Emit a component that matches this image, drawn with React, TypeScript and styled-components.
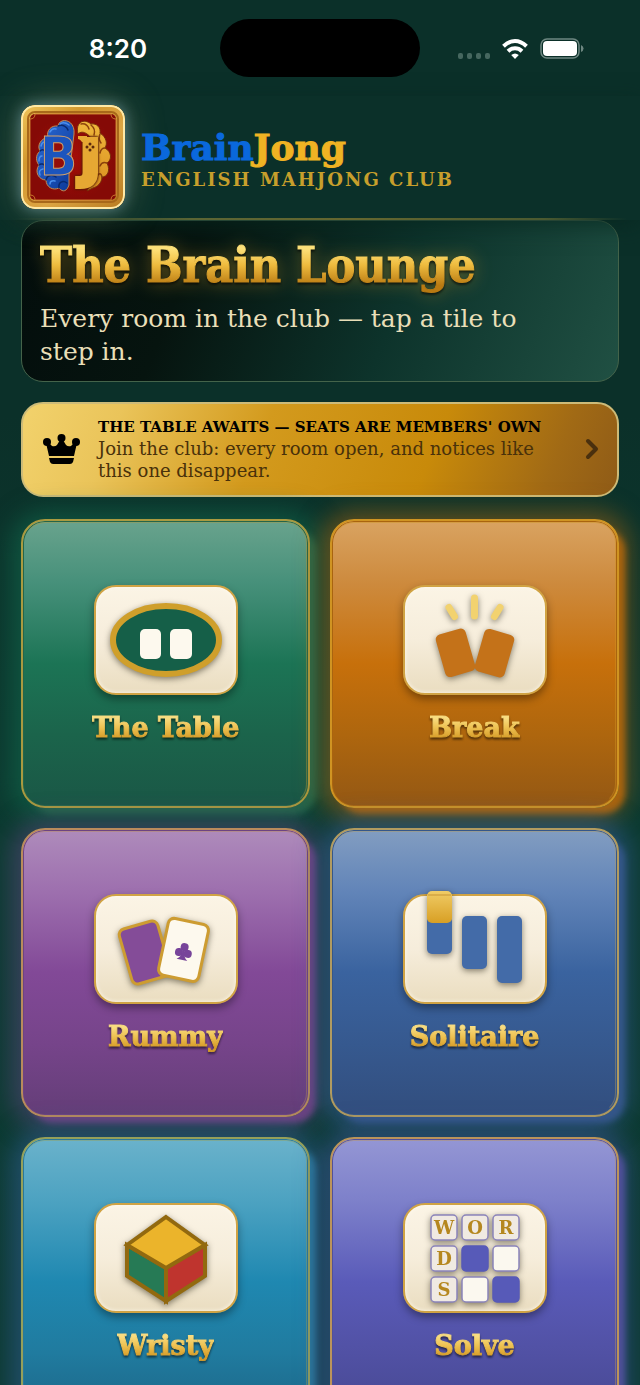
import React from 'react';
import styled, { createGlobalStyle } from 'styled-components';

const serif = `'DejaVu Serif', 'Liberation Serif', serif`;
const narrow = `'DejaVu Serif Condensed', 'DejaVu Serif', 'Liberation Serif', serif`;

const GlobalStyle = createGlobalStyle`
  *, *::before, *::after { box-sizing: border-box; }
  body { margin: 0; background: #0b3029; font-family: ${serif}; }
  h1, p { margin: 0; }
`;

const Screen = styled.div`
  height: 100vh;
  display: flex;
  flex-direction: column;
  overflow: hidden;
  background: linear-gradient(180deg, #0b3029 0%, #0b3029 30%, #0c3b31 60%, #0d3a33 100%);
`;

const StatusBar = styled.div`
  display: grid;
  grid-template-columns: 1fr 200px 1fr;
  align-items: center;
  height: 96px;
  flex: none;
  color: #fff;
`;

const Clock = styled.time`
  justify-self: center;
  padding: 2px 0 0 16px;
  font: 600 26px/32px Inter, Roboto, sans-serif;
`;

const Island = styled.div`
  height: 58px;
  border-radius: 29px;
  background: #000;
`;

const Signals = styled.div`
  display: flex;
  align-items: center;
  justify-content: flex-end;
  gap: 12px;
  padding: 2px 56px 0 0;
`;

const Header = styled.header`
  position: relative;
  z-index: 1;
  flex: none;
  display: flex;
  align-items: center;
  gap: 16px;
  padding: 9px 21px 11px;
  box-shadow: 0 6px 20px rgba(7, 38, 32, 0.7);
  &::after {
    content: '';
    position: absolute;
    inset: auto 0 0;
    height: 2px;
    background: linear-gradient(90deg, transparent 2%, #5b6534 30%, #65672f 55%, #4b5a30 85%, transparent 98%);
  }
`;

const Logo = styled.svg`
  flex: none;
  width: 104px;
  height: 104px;
  border-radius: 14px;
  box-shadow: 0 0 14px rgba(130, 175, 200, 0.55), 0 0 38px rgba(190, 190, 130, 0.36);
`;

const Monogram = styled.text`
  font-weight: 700;
  filter: drop-shadow(0 0 1px #571c05) drop-shadow(0 0 1px #571c05);
`;

const Brand = styled.div`
  padding-top: 10px;
  font-weight: 700;
`;

const BrandName = styled.div`
  font-size: 36px;
  line-height: 36px;
  color: #f0b323;
  -webkit-text-stroke: 1px currentColor;
  span { color: #0a68dc; }
`;

const Tagline = styled.div`
  font-size: 18px;
  line-height: 30px;
  letter-spacing: 2px;
  color: #c79f2c;
`;

const Main = styled.main`
  flex: 1;
  min-height: 0;
  overflow-y: auto;
  scrollbar-width: none;
  display: flex;
  flex-direction: column;
  gap: 20px;
  padding: 0 21px 20px;
`;

const Hero = styled.section`
  flex: none;
  padding: 15px 18px 13px;
  border: 1px solid #44634a;
  border-radius: 22px;
  background: linear-gradient(112deg, #030d0c 0%, #06140f 28%, #0d332b 62%, #205043 100%);
`;

const Title = styled.h1`
  font: 700 48px/58px ${narrow};
  background: linear-gradient(180deg, #ffe27a 22%, #eebb3e 50%, #b97a12 85%);
  background-clip: text;
  color: transparent;
  -webkit-text-stroke: 1px transparent;
  filter: drop-shadow(0 2px 1px rgba(0, 0, 0, 0.6)) drop-shadow(0 0 9px rgba(190, 145, 35, 0.45));
`;

const Lead = styled.p`
  padding: 8px 40px 0 0;
  font-size: 25px;
  line-height: 33px;
  color: #e9dfb8;
`;

const Banner = styled.button`
  flex: none;
  display: flex;
  align-items: center;
  gap: 18px;
  padding: 12px 17px 13px 20px;
  border: 2px solid #cdbb78;
  border-radius: 22px;
  background: linear-gradient(112deg, #f2d26c 0%, #eac45a 16%, #d39a1d 40%, #c88a0a 68%, #a16a15 88%, #8f5b17 100%);
  color: #000;
  text-align: left;
`;

const BannerText = styled.span`
  flex: 1;
  display: flex;
  flex-direction: column;
  strong { font: 700 15px/22px ${serif}; white-space: nowrap; }
  span { font: 400 18px/22px ${serif}; color: #49310a; }
`;

const Grid = styled.nav`
  display: grid;
  grid-template-columns: 1fr 1fr;
  gap: 20px;
  padding-top: 2px;
`;

interface Tone { top: string; upper: string; mid: string; low: string; bottom: string; edge: string; glow: string; rim: string }

const Tile = styled.a<{ $tone: Tone }>`
  position: relative;
  aspect-ratio: 1;
  display: flex;
  flex-direction: column;
  align-items: center;
  justify-content: center;
  gap: 17px;
  border: 2px solid ${p => p.$tone.rim};
  border-radius: 24px;
  text-decoration: none;
  background: linear-gradient(180deg, ${p => p.$tone.top} 0%, ${p => p.$tone.upper} 22%, ${p => p.$tone.mid} 50%, ${p => p.$tone.low} 75%, ${p => p.$tone.bottom} 100%);
  box-shadow:
    inset 0 0 0 1px ${p => p.$tone.edge},
    8px 8px 6px -2px ${p => p.$tone.edge},
    0 2px 24px 10px ${p => p.$tone.glow};
  &::after {
    content: '';
    position: absolute;
    inset: 1px;
    border: 1px solid ${p => p.$tone.rim};
    border-bottom-color: transparent;
    border-left-color: transparent;
    border-radius: 21px;
    opacity: 0.45;
  }
`;

const Plaque = styled.svg`
  width: 144px;
  height: 110px;
  overflow: visible;
  border: 2px solid #d0a344;
  border-radius: 22px;
  background: linear-gradient(180deg, #fbf4e5 0%, #f6eddb 50%, #eaddc0 100%);
  box-shadow: inset 0 0 4px #fffaf0, 0 4px 9px rgba(0, 0, 0, 0.38);
`;

const Shaded = styled.g`
  filter: drop-shadow(0 2px 3px rgba(20, 15, 0, 0.5));
`;

const Letter = styled.text`
  font: 700 18px ${serif};
  text-anchor: middle;
  fill: #b5871f;
`;

const TileName = styled.span`
  font: 700 27px/31px ${serif};
  background: linear-gradient(180deg, #f8dc80 20%, #eec252 50%, #d69c28 85%);
  background-clip: text;
  color: transparent;
  -webkit-text-stroke: 1px transparent;
  filter: drop-shadow(0 2px 1px rgba(0, 0, 0, 0.55));
`;

const TableArt = () => (
  <Shaded>
    <ellipse cx="72" cy="55" rx="53" ry="34" fill="#155f48" stroke="#cf9f2b" strokeWidth="6" />
    <rect x="46" y="44" width="21" height="30" rx="5" fill="#fdf9ee" />
    <rect x="76" y="44" width="22" height="30" rx="5" fill="#fdf9ee" />
  </Shaded>
);

const BreakArt = () => (
  <Shaded>
    <rect x="37" y="46" width="31" height="44" rx="5" fill="#c47219" transform="rotate(-16 52 68)" />
    <rect x="76" y="46" width="31" height="44" rx="5" fill="#c47219" transform="rotate(16 91 68)" />
    <path d="M71.500 13V31M46 22.500L51.500 31.500M97 22.500L91.500 31.500" stroke="#f2d26f" strokeWidth="7" strokeLinecap="round" />
  </Shaded>
);

const RummyArt = () => (
  <Shaded>
    <rect x="31" y="30" width="40" height="57" rx="6" fill="#844c98" stroke="#cd9c31" strokeWidth="3" transform="rotate(-16 51 59)" />
    <g transform="rotate(12 90 56)">
      <rect x="69" y="27" width="41" height="58" rx="6" fill="#fdf9ee" stroke="#cd9c31" strokeWidth="3" />
      <g fill="#77449a">
        <circle cx="90" cy="53" r="4" />
        <circle cx="85.500" cy="59" r="4" />
        <circle cx="94.500" cy="59" r="4" />
        <path d="M89 55H91Q91 64 95.500 66H84.500Q89 64 89 55Z" />
      </g>
    </g>
  </Shaded>
);

const SolitaireArt = () => (
  <Shaded>
    <defs>
      <linearGradient id="cap" x1="0" y1="0" x2="0" y2="1">
        <stop offset="0" stopColor="#f0cc66" />
        <stop offset="1" stopColor="#d89f24" />
      </linearGradient>
    </defs>
    <g fill="#436ba8">
      <rect x="24" y="22" width="25" height="38" rx="5" />
      <rect x="59" y="22" width="25" height="53" rx="5" />
      <rect x="94" y="22" width="25" height="67" rx="5" />
    </g>
    <rect x="24" y="-3" width="25" height="32" rx="5" fill="url(#cap)" />
    <path d="M25 1H48" stroke="#c79434" />
  </Shaded>
);

const WristyArt = () => (
  <Shaded>
    <g stroke="#92690f" strokeWidth="4">
      <path d="M33 42L72 65V98L33 73Z" fill="#267a55" />
      <path d="M111 42L72 65V98L111 73Z" fill="#bf342e" />
      <path d="M72 14L111 42L72 65L33 42Z" fill="#ebb42b" />
    </g>
  </Shaded>
);

const words = ['W', 'O', 'R', 'D', '#', '', 'S', '', '#'];

const SolveArt = () => (
  <Shaded>
    {words.map((w, i) => {
      const x = 28 + (i % 3) * 31;
      const y = 12 + Math.floor(i / 3) * 31;
      const solid = w === '#';
      return (
        <g key={i}>
          <rect x={x} y={y} width="26" height="25" rx="4" fill={solid ? '#575ab8' : w ? '#f0eae2' : '#fbf8ef'} stroke={solid ? '#575ab8' : '#8b84ba'} strokeWidth="1.500" />
          {w && !solid && <Letter x={x + 13} y={y + 19}>{w}</Letter>}
        </g>
      );
    })}
  </Shaded>
);

const tiles: { name: string; art: () => React.JSX.Element; tone: Tone }[] = [
  { name: 'The Table', art: TableArt, tone: { top: '#69a38d', upper: '#46907a', mid: '#1c7455', low: '#1b644b', bottom: '#1a5746', edge: '#24654a', glow: 'rgba(18,105,76,.6)', rim: '#a99a40' } },
  { name: 'Break', art: BreakArt, tone: { top: '#d9a361', upper: '#cd8a3d', mid: '#c7700b', low: '#ae660e', bottom: '#945814', edge: '#a9640f', glow: 'rgba(180,105,15,.5)', rim: '#d09422' } },
  { name: 'Rummy', art: RummyArt, tone: { top: '#ae8bbb', upper: '#9d6fae', mid: '#824997', low: '#76448a', bottom: '#643e78', edge: '#6d4382', glow: 'rgba(100,72,135,.5)', rim: '#b98b5c' } },
  { name: 'Solitaire', art: SolitaireArt, tone: { top: '#829dc1', upper: '#6184b8', mid: '#3a639f', low: '#36598f', bottom: '#324e7e', edge: '#35578a', glow: 'rgba(55,92,150,.6)', rim: '#b19b60' } },
  { name: 'Wristy', art: WristyArt, tone: { top: '#6ab2cb', upper: '#4ca2c1', mid: '#1f88b1', low: '#207b9f', bottom: '#1c6384', edge: '#2a7899', glow: 'rgba(50,95,150,.55)', rim: '#95a05a' } },
  { name: 'Solve', art: SolveArt, tone: { top: '#9496d4', upper: '#7d80ca', mid: '#5a5bb9', low: '#5151a4', bottom: '#454790', edge: '#51509b', glow: 'rgba(60,85,155,.55)', rim: '#bb945b' } },
];

const BrainLogo = () => (
  <Logo viewBox="0 0 104 104" role="img" aria-label="BrainJong logo">
    <defs>
      <linearGradient id="frame" x1="0" y1="0" x2="1" y2="1">
        <stop offset="0" stopColor="#f0c65c" />
        <stop offset=".3" stopColor="#d3982f" />
        <stop offset=".6" stopColor="#dca543" />
        <stop offset="1" stopColor="#b87a20" />
      </linearGradient>
      <radialGradient id="felt">
        <stop offset="0" stopColor="#a30d08" />
        <stop offset="1" stopColor="#850a06" />
      </radialGradient>
      <linearGradient id="gold" x1="0" y1="0" x2="0" y2="1">
        <stop offset="0" stopColor="#efb83c" />
        <stop offset="1" stopColor="#d98f1f" />
      </linearGradient>
      <linearGradient id="blue" x1="0" y1="0" x2="1" y2="1">
        <stop offset="0" stopColor="#2a6bd6" />
        <stop offset="1" stopColor="#0d3796" />
      </linearGradient>
    </defs>
    <rect width="104" height="104" rx="14" fill="url(#frame)" />
    <rect x="1" y="1" width="102" height="102" rx="13" fill="none" stroke="#ffe9a6" strokeWidth="2" />
    <rect x="7" y="7" width="90" height="90" rx="7" fill="none" stroke="#a8681a" strokeWidth="2" />
    <rect x="9" y="9" width="86" height="86" rx="5" fill="url(#felt)" />
    <path d="M14 9H90Q90 14 95 14V90Q90 90 90 95H14Q14 90 9 90V14Q14 14 14 9Z" fill="none" stroke="#c8792c" />
    <path d="M53 29C54 19 47 14 41 16C38 17 37 20 37 21C30 20 25 26 27 32C19 34 16 41 19 46C14 50 15 57 18 60C13 67 18 75 25 75C25 82 32 86 38 83C42 88 46 86 48 80V70Z" fill="url(#blue)" stroke="#c58a4e" />
    <path d="M37 21C42 19 46 22 47 25M19 46C21 44 23 45 24 46M18 60C20 58 23 59 24 61M25 75C26 70 31 69 35 72M38 83C37 77 42 75 46 78" fill="none" stroke="#09296f" strokeWidth="1.500" strokeLinecap="round" />
    <path d="M39 19Q43 16 48 20M29 27Q31 23 35 24M20 41Q21 37 24 37M18 56Q18 51 21 51M19 70Q17 65 22 64M29 79Q29 75 34 76" fill="none" stroke="#4c8fec" strokeWidth="1.500" strokeLinecap="round" />
    <path d="M32 34H45V66H32Z" fill="#930d08" />
    <text x="19" y="70" fontFamily="DejaVu Sans Condensed, DejaVu Sans, sans-serif" fontWeight="700" fontSize="54" fill="#1c55bd" stroke="#d0a06a" strokeWidth="1">B</text>
    <path d="M57 29C54 17 63 13 70 19C76 18 80 23 79 28C85 32 87 38 84 43C91 47 91 55 86 58C90 66 86 72 81 72C81 78 76 82 72 83L66 86L74 70V40C70 30 62 24 57 29Z" fill="url(#gold)" stroke="#7a300b" />
    <path d="M60 19Q66 18 68 24M70 20Q75 24 73 30M79 29Q77 34 80 38M84 43Q80 43 79 48M86 58Q81 56 79 61M81 72Q80 67 77 70" fill="none" stroke="#8b430c" strokeWidth="1.500" strokeLinecap="round" />
    <Monogram x="60" y="71" fontFamily="DejaVu Sans, sans-serif" fontSize="50" fill="#e6a833" stroke="#e6a833" strokeWidth="6">J</Monogram>
    <path d="M57 31H66V37H61Q59 34 57 34Z" fill="#e6a833" />
    <g fill="#5b2a0c">
      <circle cx="69" cy="39" r="1.500" /><circle cx="66" cy="42" r="1.500" /><circle cx="72" cy="42" r="1.500" /><circle cx="69" cy="45" r="1.500" />
    </g>
  </Logo>
);

export default function App() {
  return (
    <Screen>
      <GlobalStyle />
      <StatusBar>
        <Clock>8:20</Clock>
        <Island />
        <Signals>
          <svg width="32" height="26" fill="#46675f">
            <rect x="0" y="17" width="5" height="6" rx="2" /><rect x="9" y="17" width="5" height="6" rx="2" />
            <rect x="18" y="17" width="5" height="6" rx="2" /><rect x="27" y="17" width="5" height="6" rx="2" />
          </svg>
          <svg width="26" height="22" viewBox="0 0 26 22" fill="none" stroke="#fff" strokeWidth="4">
            <path d="M1.500 8.200Q7 3 13 3T24.500 8.200" />
            <path d="M6 13.200Q9 10.300 13 10.300T20 13.200" />
            <path d="M9.200 17Q13 14 16.800 17L13 21Z" fill="#fff" stroke="none" />
          </svg>
          <svg width="44" height="22" viewBox="0 0 44 22">
            <rect x="1" y="1" width="38" height="19" rx="6" fill="none" stroke="#6e8781" strokeWidth="1.500" />
            <rect x="3" y="3" width="34" height="15" rx="4" fill="#fff" />
            <path d="M41 7Q43.500 8 43.500 10.500T41 14Z" fill="#6e8781" />
          </svg>
        </Signals>
      </StatusBar>
      <Header>
        <BrainLogo />
        <Brand>
          <BrandName><span>Brain</span>Jong</BrandName>
          <Tagline>ENGLISH MAHJONG CLUB</Tagline>
        </Brand>
      </Header>
      <Main>
        <Hero>
          <Title>The Brain Lounge</Title>
          <Lead>Every room in the club — tap a tile to step in.</Lead>
        </Hero>
        <Banner type="button">
          <svg width="37" height="30" viewBox="0 0 37 30">
            <path d="M3 9L5 8L9 12Q12 13 14 11L17 6H20L23 11Q25 13 28 12L32 8L34 9L31 22H6Z" />
            <circle cx="4" cy="8" r="4" /><circle cx="18.500" cy="4" r="4" /><circle cx="33" cy="8" r="4" />
            <path d="M6 24H31L30 28Q29 30 27 30H10Q8 30 7 28Z" />
          </svg>
          <BannerText>
            <strong>THE TABLE AWAITS — SEATS ARE MEMBERS' OWN</strong>
            <span>Join the club: every room open, and notices like this one disappear.</span>
          </BannerText>
          <svg width="16" height="22" viewBox="0 0 16 22" fill="none" stroke="#4a300e" strokeWidth="4" strokeLinecap="round" strokeLinejoin="round">
            <path d="M4 3L12 11L4 19" />
          </svg>
        </Banner>
        <Grid aria-label="Rooms">
          {tiles.map(({ name, art: Art, tone }) => (
            <Tile key={name} href={`#${name.toLowerCase().replace(' ', '-')}`} $tone={tone}>
              <Plaque viewBox="2 2 140 106" aria-hidden="true"><Art /></Plaque>
              <TileName>{name}</TileName>
            </Tile>
          ))}
        </Grid>
      </Main>
    </Screen>
  );
}
